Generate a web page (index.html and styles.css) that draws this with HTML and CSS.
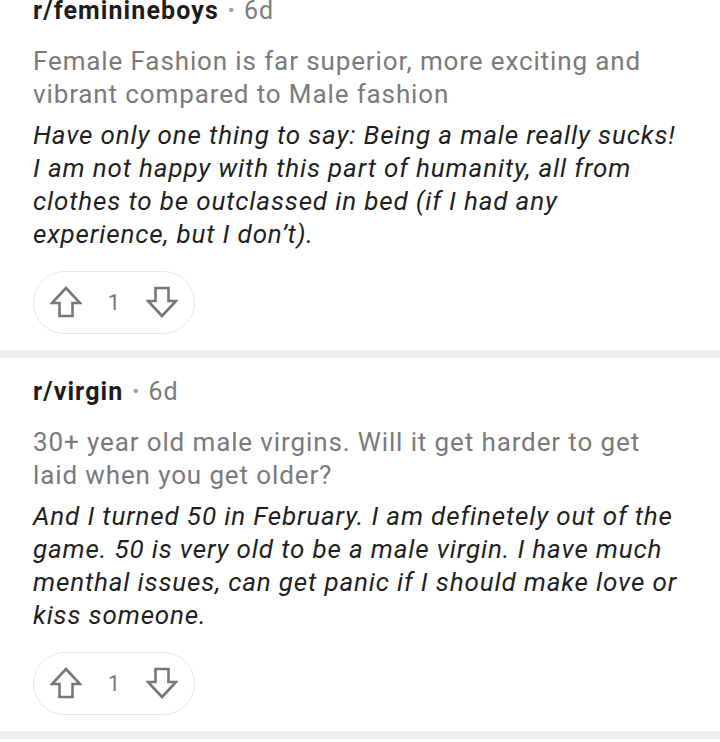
FILE: index.html
```html
<!DOCTYPE html>
<html lang="en">
<head>
    <meta charset="UTF-8">
    <meta name="viewport" content="width=device-width, initial-scale=1.0">
    <title>Comments</title>
    <link rel="stylesheet" href="styles.css">
</head>
<body>
    <div class="feed">
        <div class="post first">
            <div class="post-head">
                <span class="sub">r/feminineboys</span>
                <span class="dot">&bull;</span>
                <span class="age">6d</span>
            </div>
            <div class="post-title">Female Fashion is far superior, more exciting and vibrant compared to Male fashion</div>
            <div class="comment">Have only one thing to say: Being a male really sucks! I am not happy with this part of humanity, all from clothes to be outclassed in bed (if I had any experience, but I don&rsquo;t).</div>
            <div class="votes">
                <svg class="arrow" viewBox="0 0 32 32"><path d="M16 2 L2 17 H9.5 V30 H22.5 V17 H30 Z"/></svg>
                <span class="count">1</span>
                <svg class="arrow" viewBox="0 0 32 32"><path d="M16 30 L2 15 H9.5 V2 H22.5 V15 H30 Z"/></svg>
            </div>
        </div>
        <div class="post">
            <div class="post-head">
                <span class="sub">r/virgin</span>
                <span class="dot">&bull;</span>
                <span class="age">6d</span>
            </div>
            <div class="post-title">30+ year old male virgins. Will it get harder to get laid when you get older?</div>
            <div class="comment">And I turned 50 in February. I am definetely out of the game. 50 is very old to be a male virgin. I have much menthal issues, can get panic if I should make love or kiss someone.</div>
            <div class="votes">
                <svg class="arrow" viewBox="0 0 32 32"><path d="M16 2 L2 17 H9.5 V30 H22.5 V17 H30 Z"/></svg>
                <span class="count">1</span>
                <svg class="arrow" viewBox="0 0 32 32"><path d="M16 30 L2 15 H9.5 V2 H22.5 V15 H30 Z"/></svg>
            </div>
        </div>
    </div>
</body>
</html>
```

FILE: styles.css
```css
body, html {
    margin: 0;
    padding: 0;
    background: #fff;
    font-family: 'Roboto', 'Liberation Sans', sans-serif;
    overflow: hidden;
}

.feed {
    margin-top: -23.5px;
}

.post {
    padding: 17px 33px 16px;
    border-bottom: 8px solid #ededed;
}

.post-head {
    font-size: 25px;
    line-height: 33px;
    display: flex;
    align-items: center;
    gap: 9px;
}

.sub {
    font-weight: 700;
    color: #1c1c1c;
    letter-spacing: 1.1px;
}

.dot {
    color: #a0a0a0;
    font-size: 21px;
}

.age {
    color: #7c7c7c;
    letter-spacing: 1px;
}

.post-title {
    margin-top: 18px;
    font-size: 26px;
    line-height: 33px;
    letter-spacing: 0.88px;
    color: #7a7a7a;
}

.comment {
    margin-top: 8px;
    font-size: 26px;
    line-height: 33px;
    letter-spacing: 0.85px;
    font-style: italic;
    color: #1f1f1f;
}

.votes {
    margin-top: 20px;
    width: 162px;
    height: 63px;
    box-sizing: border-box;
    border: 1.5px solid #e8e8e8;
    border-radius: 32px;
    display: flex;
    align-items: center;
    padding-left: 16px;
}

.arrow {
    width: 32px;
    height: 32px;
    fill: none;
    stroke: #777;
    stroke-width: 2.6;
    stroke-linejoin: miter;
}

.count {
    font-size: 22px;
    color: #777;
    width: 64px;
    text-align: center;
}
```
